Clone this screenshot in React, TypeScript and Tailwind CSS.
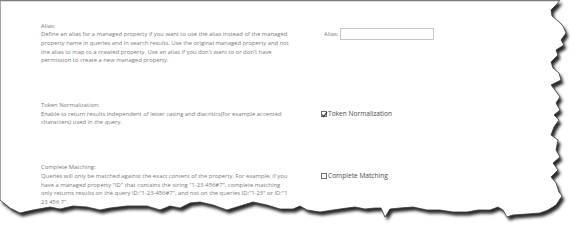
import React from 'react'

const font = { fontFamily: '"Open Sans", "Noto Sans", sans-serif' }

const rightEdge: [number, number][] = [
  [560, 0], [556, 5], [551, 10], [552, 16], [558, 21], [563, 26], [566, 33], [561, 40],
  [564, 45], [556, 50], [558, 55], [551, 62], [553, 68], [559, 73], [561, 80], [551, 85],
  [555, 90], [560, 97], [556, 103], [560, 110], [554, 115], [559, 120], [554, 127],
  [551, 135], [558, 140], [556, 150], [560, 157], [553, 163], [558, 170], [551, 177],
  [556, 183], [559, 192], [562, 196], [556, 205], [548, 210], [540, 213], [527, 214],
  [513, 215], [507, 217], [503, 210], [498, 207], [490, 210], [478, 210], [467, 212],
  [453, 212], [440, 210], [427, 210], [413, 207], [400, 208], [390, 209], [385, 217],
  [381, 208], [375, 208], [365, 209], [355, 207], [347, 208], [333, 210], [320, 212],
  [307, 210], [300, 206], [293, 209], [280, 209], [267, 205], [253, 202], [240, 206],
  [227, 210], [213, 205], [200, 202], [190, 203], [180, 208], [170, 206], [160, 210],
  [147, 206], [127, 206], [110, 208], [100, 210], [87, 207], [73, 206], [60, 209],
  [50, 207], [33, 210], [20, 213], [10, 208], [0, 200],
]

function TornPaper() {
  const edge = rightEdge.map(p => p.join(',')).join(' ')
  const paper = `0,0 ${edge}`
  return (
    <svg className="absolute inset-0" width="576" height="234" viewBox="0 0 576 234">
      <defs>
        <filter id="sh" x="-10%" y="-10%" width="120%" height="130%">
          <feGaussianBlur stdDeviation="1.4" />
        </filter>
      </defs>
      <polygon points={paper} fill="#262626" transform="translate(2.5,3.5)" filter="url(#sh)" />
      <polygon points={paper} fill="#ffffff" />
      <polyline points={edge} fill="none" stroke="#3c3c3c" strokeWidth="0.8" />
      <polyline points="0,200 0,0.6 560,0.6" fill="none" stroke="#7c7c7c" strokeWidth="1.4" />
    </svg>
  )
}

function Checkbox({ checked }: { checked?: boolean }) {
  return (
    <span className="relative inline-block w-[6px] h-[6px] border border-[#6f6f6f] bg-white">
      {checked && (
        <svg className="absolute -left-[1px] -top-[1.5px]" width="7" height="7" viewBox="0 0 7 7">
          <path d="M1.2 3.6 L2.8 5.3 L6 1.2" fill="none" stroke="#333" strokeWidth="1.1" />
        </svg>
      )}
    </span>
  )
}

function Section({ title, lines, children }: { title: string; lines: string[]; children: React.ReactNode }) {
  return (
    <div className="flex">
      <div className="w-[280px] text-[5.85px] leading-[8.7px] text-[#7a7a7a] whitespace-nowrap">
        <div>{title}</div>
        {lines.map((l, i) => (
          <div key={i}>{l}</div>
        ))}
      </div>
      <div>{children}</div>
    </div>
  )
}

export default function App() {
  return (
    <div className="relative w-[576px] h-[234px] bg-white overflow-hidden" style={font}>
      <TornPaper />
      <div className="relative flex flex-col gap-[36px] pl-[41px] pt-[21.5px]">
        <Section
          title="Alias:"
          lines={[
            'Define an alias for a managed property if you want to use the alias instead of the managed',
            'property name in queries and in search results. Use the original managed property and not',
            "the alias to map to a crawled property. Use an alias if you don't want to or don't have",
            'permission to create a new managed property.',
          ]}
        >
          <div className="flex items-center gap-[2px] pt-[6.5px] pl-[3px]">
            <span className="text-[5.85px] text-[#7a7a7a]">Alias:</span>
            <span className="block w-[94px] h-[12px] border border-[#c8c8c8] bg-white" />
          </div>
        </Section>
        <Section
          title="Token Normalization:"
          lines={[
            'Enable to return results independent of letter casing and diacritics(for example accented',
            'characters) used in the query.',
          ]}
        >
          <div className="flex items-center gap-[1px] pt-[9px]">
            <Checkbox checked />
            <span className="text-[6.6px] text-[#4a4a4a] leading-[8px]">Token Normalization</span>
          </div>
        </Section>
        <Section
          title="Complete Matching:"
          lines={[
            'Queries will only be matched against the exact content of the property. For example, if you',
            'have a managed property "ID" that contains the string "1-23-456#7", complete matching',
            'only returns results on the query ID:"1-23-456#7", and not on the queries ID:"1-23" or  ID:"1',
            '23 456 7".',
          ]}
        >
          <div className="flex items-center gap-[1px] pt-[9px]">
            <Checkbox />
            <span className="text-[6.6px] text-[#4a4a4a] leading-[8px]">Complete Matching</span>
          </div>
        </Section>
      </div>
    </div>
  )
}
